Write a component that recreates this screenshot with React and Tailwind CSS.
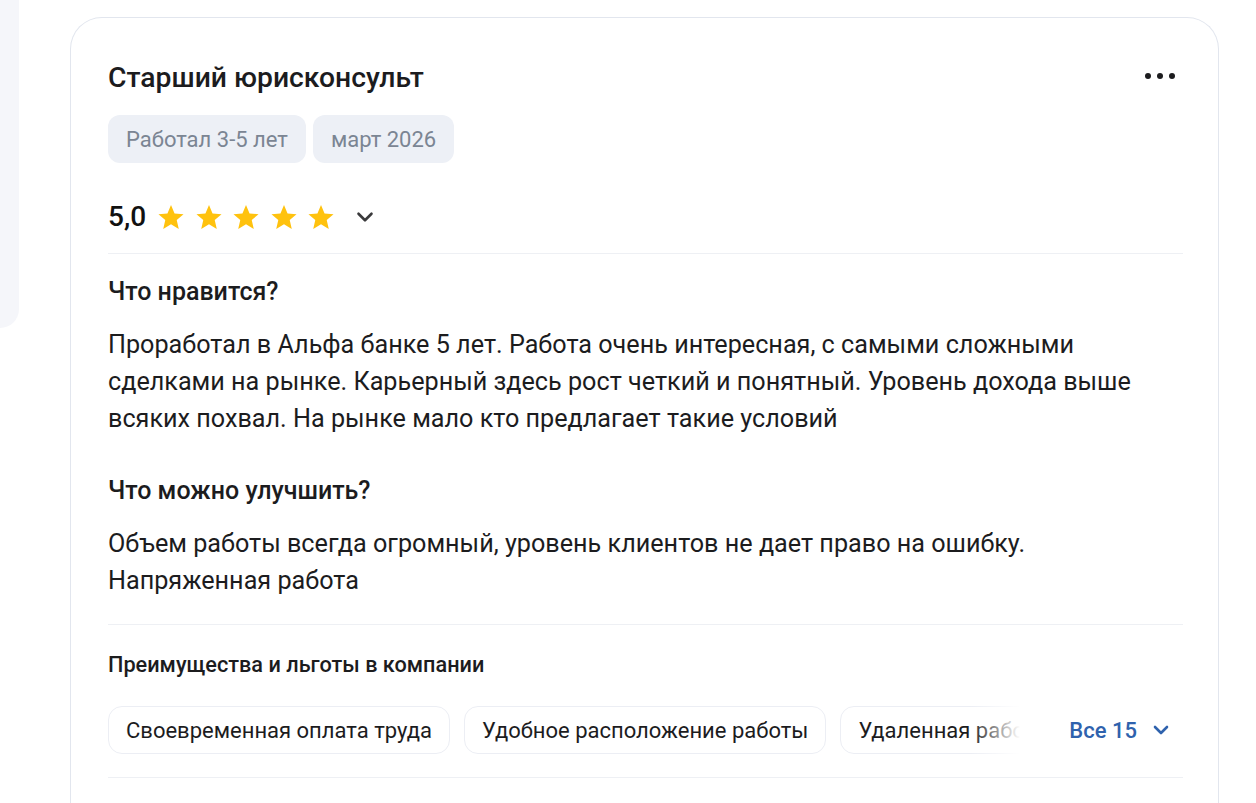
import { ChevronDown } from "lucide-react";

const perks = [
  "Своевременная оплата труда",
  "Удобное расположение работы",
  "Удаленная работа",
];

function Star() {
  return (
    <svg viewBox="0 0 24 24" className="h-[28px] w-[28px]" aria-hidden>
      <path
        fill="#ffc20e"
        d="M12 1.8l3.05 7.1 7.7.68-5.84 5.07 1.75 7.53L12 18.2l-6.66 3.98 1.75-7.53L1.25 9.58l7.7-.68z"
      />
    </svg>
  );
}

function Section({ title, children, top }) {
  return (
    <div className={top}>
      <h3 className="text-[25px] font-medium leading-[32px] text-[#1c1c1e]">{title}</h3>
      <p className="mt-[18px] text-[25.2px] leading-[37px] text-[#1c1c1e]">{children}</p>
    </div>
  );
}

export default function App() {
  return (
    <div className="flex min-h-[803px] overflow-hidden bg-white font-['Roboto','Noto_Sans',sans-serif]">
      <div className="h-[328px] w-[19px] shrink-0 rounded-br-[22px] bg-[#f5f6fa]" />

      <div className="ml-[51px] mt-[17px] w-[1149px] shrink-0 rounded-t-[32px] border border-b-0 border-[#e2e6ee] pl-[37px] pr-[35px] pt-[43px]">
        <div className="flex items-center justify-between">
          <h2 className="text-[28.3px] font-medium leading-[34px] text-[#1c1c1e]">
            Старший юрисконсульт
          </h2>
          <button className="mr-[8px] flex items-center gap-[6px] pb-[4px]">
            <span className="h-[6px] w-[6px] rounded-full bg-[#1c1c1e]" />
            <span className="h-[6px] w-[6px] rounded-full bg-[#1c1c1e]" />
            <span className="h-[6px] w-[6px] rounded-full bg-[#1c1c1e]" />
          </button>
        </div>

        <div className="mt-[20px] flex gap-[7px]">
          <span className="flex h-[48px] items-center rounded-[12px] bg-[#edf0f6] px-[18px] text-[22px] text-[#7b8593]">
            Работал 3-5 лет
          </span>
          <span className="flex h-[48px] items-center rounded-[12px] bg-[#edf0f6] px-[18px] text-[22px] text-[#7b8593]">
            март 2026
          </span>
        </div>

        <div className="mt-[38px] flex h-[32px] items-center">
          <span className="text-[28px] font-medium text-[#111]">5,0</span>
          <div className="ml-[11px] flex gap-[9.5px]">
            <Star />
            <Star />
            <Star />
            <Star />
            <Star />
          </div>
          <ChevronDown className="ml-[17px] h-[26px] w-[26px] text-[#3a3a3c]" strokeWidth={2.4} />
        </div>

        <div className="mt-[20px] border-t border-[#eef0f4]" />

        <Section title="Что нравится?" top="mt-[22px]">
          Проработал в Альфа банке 5 лет. Работа очень интересная, с самыми сложными сделками на
          рынке. Карьерный здесь рост четкий и понятный. Уровень дохода выше всяких похвал. На рынке
          мало кто предлагает такие условий
        </Section>

        <Section title="Что можно улучшить?" top="mt-[38px]">
          Объем работы всегда огромный, уровень клиентов не дает право на ошибку. Напряженная
          работа
        </Section>

        <div className="mt-[25px] border-t border-[#eef0f4]" />

        <h4 className="mt-[26px] text-[21.7px] font-medium leading-[28px] text-[#1c1c1e]">
          Преимущества и льготы в компании
        </h4>

        <div className="mt-[27px] flex items-center">
          <div className="relative w-[912px] overflow-hidden">
            <div className="flex gap-[14px]">
              {perks.map((p) => (
                <span
                  key={p}
                  className="flex h-[48px] shrink-0 items-center whitespace-nowrap rounded-[14px] border border-[#eceef4] px-[17px] text-[22px] text-[#1c1c1e]"
                >
                  {p}
                </span>
              ))}
            </div>
            <div className="absolute inset-y-0 right-0 w-[50px] bg-gradient-to-r from-white/0 to-white" />
          </div>
          <button className="ml-auto flex items-center gap-[12px] pr-[10px] text-[22px] font-medium text-[#2f62ad]">
            Все 15
            <ChevronDown className="h-[24px] w-[24px]" strokeWidth={2.6} />
          </button>
        </div>

        <div className="mt-[23px] border-t border-[#eef0f4]" />
      </div>
    </div>
  );
}
